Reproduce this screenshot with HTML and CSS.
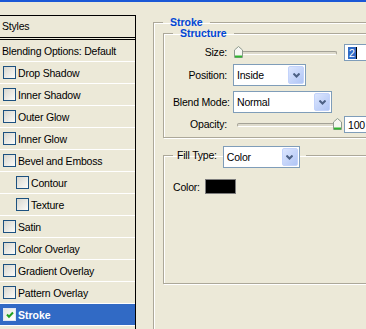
FILE: index.html
```html
<!DOCTYPE html>
<html>
<head>
<meta charset="utf-8">
<title>Layer Style - Stroke</title>
<link rel="stylesheet" href="styles.css">
</head>
<body>
<div class="titlebar"></div>
<div class="dialog">
  <aside class="sidebar">
    <div class="styles-head">Styles</div>
    <ul class="fx-list">
      <li class="fx plain">Blending Options: Default</li>
      <li class="fx"><span class="cb"></span>Drop Shadow</li>
      <li class="fx"><span class="cb"></span>Inner Shadow</li>
      <li class="fx"><span class="cb"></span>Outer Glow</li>
      <li class="fx"><span class="cb"></span>Inner Glow</li>
      <li class="fx"><span class="cb"></span>Bevel and Emboss</li>
      <li class="fx sub"><span class="cb"></span>Contour</li>
      <li class="fx sub"><span class="cb"></span>Texture</li>
      <li class="fx"><span class="cb"></span>Satin</li>
      <li class="fx"><span class="cb"></span>Color Overlay</li>
      <li class="fx"><span class="cb"></span>Gradient Overlay</li>
      <li class="fx"><span class="cb"></span>Pattern Overlay</li>
      <li class="fx selected"><span class="cb"><svg width="8" height="8" viewBox="0 0 8 8"><path d="M1 3.5 L3 5.8 L7 1.5" fill="none" stroke="#21a121" stroke-width="2"/></svg></span>Stroke</li>
    </ul>
  </aside>
  <main class="panel">
    <fieldset class="group outer">
      <legend>Stroke</legend>
      <fieldset class="group structure">
        <legend>Structure</legend>
        <div class="row r-size">
          <span class="lbl">Size:</span>
          <div class="slider">
            <span class="track"></span>
            <span class="thumb" style="left:1px"><svg width="9" height="12" viewBox="0 0 9 12"><path d="M0.5 4 L4.5 0.5 L8.5 4 V11.5 H0.5 Z" fill="#f7f7f3" stroke="#8d9a8d"/><path d="M1 10.5 H8" stroke="#2fb52f" stroke-width="2"/></svg></span>
          </div>
          <div class="num"><span class="num-sel">2</span><span class="caret"></span></div>
        </div>
        <div class="row r-pos">
          <span class="lbl">Position:</span>
          <div class="select w-pos">
            <span class="select-text">Inside</span>
            <span class="select-btn"><svg width="7" height="5" viewBox="0 0 7 5"><path d="M0.5 0.5 L3.5 3.5 L6.5 0.5" fill="none" stroke="#4d6185" stroke-width="2"/></svg></span>
          </div>
        </div>
        <div class="row r-blend">
          <span class="lbl">Blend Mode:</span>
          <div class="select w-blend">
            <span class="select-text">Normal</span>
            <span class="select-btn"><svg width="7" height="5" viewBox="0 0 7 5"><path d="M0.5 0.5 L3.5 3.5 L6.5 0.5" fill="none" stroke="#4d6185" stroke-width="2"/></svg></span>
          </div>
        </div>
        <div class="row r-opac">
          <span class="lbl">Opacity:</span>
          <div class="slider">
            <span class="track"></span>
            <span class="thumb" style="left:100px"><svg width="9" height="12" viewBox="0 0 9 12"><path d="M0.5 4 L4.5 0.5 L8.5 4 V11.5 H0.5 Z" fill="#f7f7f3" stroke="#8d9a8d"/><path d="M1 10.5 H8" stroke="#2fb52f" stroke-width="2"/></svg></span>
          </div>
          <div class="num">100</div>
        </div>
      </fieldset>
      <fieldset class="group fill">
        <legend class="fill-legend">
          <span>Fill Type:</span>
          <div class="select w-fill">
            <span class="select-text">Color</span>
            <span class="select-btn"><svg width="7" height="5" viewBox="0 0 7 5"><path d="M0.5 0.5 L3.5 3.5 L6.5 0.5" fill="none" stroke="#4d6185" stroke-width="2"/></svg></span>
          </div>
        </legend>
        <div class="color-row">
          <span class="color-lbl">Color:</span>
          <span class="swatch"></span>
        </div>
      </fieldset>
    </fieldset>
  </main>
</div>
</body>
</html>
```
FILE: styles.css
```css
html, body {
  margin: 0;
  padding: 0;
}
body {
  width: 366px;
  height: 329px;
  overflow: hidden;
  background: #ece9d8;
  font-family: "Liberation Sans", Arial, sans-serif;
  font-size: 10.5px;
  letter-spacing: -0.2px;
  color: #000;
}
.titlebar {
  height: 2px;
  background: #1b58d6;
}
.dialog {
  display: flex;
  height: 327px;
}

/* left list */
.sidebar {
  width: 135px;
  flex: none;
  margin-top: 13px;
  border-top: 1px solid #000;
  border-right: 1px solid #000;
}
.styles-head {
  height: 21px;
  line-height: 21px;
  padding-left: 2px;
  border-bottom: 1px solid #000;
}
.fx-list {
  list-style: none;
  margin: 1px 0 0;
  padding: 0;
  border-top: 1px solid #000;
}
.fx {
  height: 21px;
  border-bottom: 1px solid #fff;
  display: flex;
  align-items: center;
  gap: 2px;
  padding-left: 3px;
  white-space: nowrap;
}
.fx.plain {
  padding-left: 2px;
}
.fx.sub {
  padding-left: 16px;
}
.fx.selected {
  background: #316ac5;
  color: #fff;
  font-weight: bold;
  letter-spacing: 0;
}
.cb {
  width: 13px;
  height: 13px;
  box-sizing: border-box;
  border: 1px solid #1c5180;
  background: linear-gradient(135deg, #d8d7cf, #fbfbf9);
  flex: none;
  display: flex;
  align-items: center;
  justify-content: center;
}
.selected .cb {
  border-color: #dfe6f2;
  background: linear-gradient(135deg, #e6e6e0, #fff);
}

/* right panel */
.panel {
  flex: 1;
  min-width: 0;
  padding: 14px 0 0 17px;
}
.group {
  margin: 0;
  border: 1px solid #aca899;
  box-shadow: inset 1px 1px 0 #fff, 1px 1px 0 #fff;
  padding: 0 0 0 9px;
  min-width: 0;
}
.group > legend {
  padding: 0 7px;
  font-weight: bold;
  color: #0046d5;
  line-height: 13px;
  letter-spacing: 0;
}
.outer {
  width: 300px;
  height: 420px;
  box-sizing: border-box;
}
.structure {
  margin-top: -2px;
  padding-bottom: 5px;
}
.row {
  display: flex;
  align-items: center;
}
.lbl {
  width: 54px;
  flex: none;
  text-align: right;
  margin-right: 6px;
  white-space: nowrap;
}
.r-size { margin-top: 2px; height: 19px; }
.r-pos { margin-top: 3px; height: 22px; }
.r-blend { margin-top: 5px; height: 22px; }
.r-opac { margin-top: 2px; height: 17px; }

.slider {
  position: relative;
  width: 108px;
  height: 12px;
  flex: none;
}
.track {
  display: block;
  margin: 5px 4px 0;
  height: 2px;
  border: 1px solid #a4a297;
  border-bottom-color: #fff;
  border-radius: 2px;
  background: #dedbcd;
}
.thumb {
  position: absolute;
  top: 0;
  width: 9px;
  height: 12px;
}
.thumb svg {
  display: block;
}
.num {
  margin-left: 3px;
  margin-top: 2px;
  width: 40px;
  height: 17px;
  box-sizing: border-box;
  border: 1px solid #7f9db9;
  background: #fff;
  padding-left: 3px;
  display: flex;
  align-items: center;
  flex: none;
}
.num-sel {
  background: #316ac5;
  color: #fff;
  padding: 0 1px;
  line-height: 12px;
}
.caret {
  width: 1px;
  height: 12px;
  background: #000;
}

.select {
  display: flex;
  box-sizing: border-box;
  height: 22px;
  border: 1px solid #7f9db9;
  background: #fff;
  padding: 1px;
  flex: none;
}
.w-pos { width: 73px; }
.w-blend { width: 99px; }
.w-fill { width: 77px; }
.select-text {
  flex: 1;
  padding-left: 2px;
  display: flex;
  align-items: center;
  color: #000;
}
.select-btn {
  width: 16px;
  box-sizing: border-box;
  border: 1px solid #c3d3fb;
  border-radius: 2px;
  background: linear-gradient(135deg, #dce6fe, #b0c5f5);
  display: flex;
  align-items: center;
  justify-content: center;
}
.select-btn svg {
  display: block;
}

.fill {
  margin-top: 8px;
  padding-bottom: 89px;
}
.group > legend.fill-legend {
  display: flex;
  align-items: center;
  gap: 6px;
  height: 18px;
  padding: 0 6px 0 4px;
  color: #000;
  font-weight: normal;
  letter-spacing: -0.2px;
}
.fill-legend .select {
  align-self: flex-start;
}
.color-row {
  display: flex;
  align-items: center;
  height: 15px;
  margin-top: 15px;
}
.color-lbl {
  width: 32px;
  flex: none;
}
.swatch {
  width: 31px;
  height: 15px;
  box-sizing: border-box;
  border: 1px solid #7c7c7c;
  background: #000;
}
```
